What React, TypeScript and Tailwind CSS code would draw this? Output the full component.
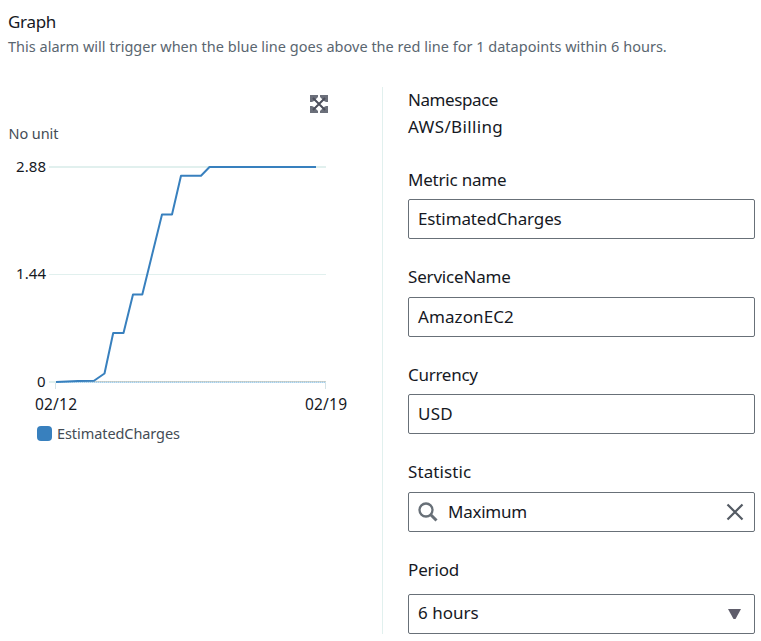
import type { ReactNode } from "react";

const SERIES =
  "56,382 78,381 94,380.7 104.5,373.5 113.2,333 123.5,333 133,294.5 142.3,294.5 162,214.5 172,214.5 181,175.7 201,175.7 209.5,167 316,167";

function ExpandIcon() {
  return (
    <svg width="18" height="18" viewBox="0 0 18 18" fill="#6b6f7a">
      <path d="M0 0h8v2L6 4 4 6 2 7H0ZM18 0v7h-2l-2-1-4-4V0ZM0 18v-7h2l2 1 4 4v2ZM18 18h-8v-2l4-4 2-1h2Z" />
      <path d="m3 3 12 12M15 3 3 15" stroke="#4c4f5c" strokeWidth="2" />
    </svg>
  );
}

function Chart() {
  return (
    <svg
      className="block"
      width="382"
      height="334"
      viewBox="0 120 382 334"
      fontFamily="'Noto Sans', 'Open Sans', sans-serif"
      fontSize="15"
      fill="#16191f"
    >
      <text x="8.5" y="139" fontSize="14.5" fill="#444c55" textLength="50">No unit</text>
      <path d="M49 167H326" stroke="#e1f0ee" strokeWidth="2" />
      <path d="M49 274.5H326" stroke="#e1f0ee" />
      <path d="M49 382H56" stroke="#e1f0ee" strokeWidth="2" />
      <path d="M55.5 383v6M325.5 383v6" stroke="#d5e3e6" />
      <path d="M56 381.5H326" stroke="#cfd3c8" />
      <path d="M56 382.5H326" stroke="#a5cfec" />
      <path d="M56 381.5H326" stroke="#b9c7cc" strokeDasharray="1 1" />
      <path d="M57 382.5H326" stroke="#cfe5f3" strokeDasharray="1 1" />
      <polyline points={SERIES} fill="none" stroke="#3880be" strokeWidth="2" strokeLinejoin="round" />
      <text x="16" y="172" textLength="30">2.88</text>
      <text x="16" y="279" textLength="30">1.44</text>
      <text x="37" y="387">0</text>
      <text x="35" y="410" fontSize="15.5" textLength="42">02/12</text>
      <text x="305" y="410" fontSize="15.5" textLength="42">02/19</text>
      <rect x="37" y="426" width="15" height="15" rx="4" fill="#3880be" />
      <text x="57" y="439" fontSize="14.5" fill="#444c55" textLength="123">EstimatedCharges</text>
    </svg>
  );
}

function Box({ children }: { children: ReactNode }) {
  return (
    <div className="flex h-10 w-[347px] items-center rounded-[2px] border border-[#687078] pr-[10px] pl-[9px]">
      {children}
    </div>
  );
}

export default function App() {
  return (
    <main className="h-[641px] w-[761px] overflow-hidden bg-white font-['Noto_Sans','Open_Sans',sans-serif] text-[17px] leading-6 text-[#16191f]">
      <header className="h-[87px] pt-[10px] pl-2">
        <h2 className="h-6 tracking-[-0.3px]">Graph</h2>
        <p className="whitespace-nowrap text-[14.5px] tracking-[0.012px] text-[#5a6670]">
          This alarm will trigger when the blue line goes above the red line for 1 datapoints within 6 hours.
        </p>
      </header>
      <div className="flex h-[547px]">
        <section className="w-[382px] shrink-0">
          <div className="flex h-[33px] justify-end pt-2 pr-[54px]">
            <ExpandIcon />
          </div>
          <Chart />
        </section>
        <section className="flex flex-col border-l border-[#e1f0ee] pl-[25px]">
          <div className="h-[80px] pt-px">
            <div className="h-[27px] tracking-[-0.42px]">Namespace</div>
            <div className="tracking-[0.35px]">AWS/Billing</div>
          </div>
          <div className="h-[98px]">
            <div className="h-8 pt-px tracking-[-0.2px]">Metric name</div>
            <Box>
              <span className="tracking-[-0.12px]">EstimatedCharges</span>
            </Box>
          </div>
          <div className="h-[97px]">
            <div className="h-8 tracking-[-0.18px]">ServiceName</div>
            <Box>
              <span className="tracking-[0.1px]">AmazonEC2</span>
            </Box>
          </div>
          <div className="h-[98px]">
            <div className="h-8 pt-px tracking-[-0.27px]">Currency</div>
            <Box>
              <span className="tracking-[0.2px]">USD</span>
            </Box>
          </div>
          <div className="h-[98px]">
            <div className="h-8 tracking-[0.1px]">Statistic</div>
            <Box>
              <svg width="20" height="20" viewBox="0 0 20 20" fill="none" stroke="#687078">
                <circle cx="8" cy="8" r="6.5" strokeWidth="2.3" />
                <path d="m12.5 12.5 6 6" strokeWidth="3" />
              </svg>
              <span className="ml-[10px] tracking-[-0.25px]">Maximum</span>
              <svg className="ml-auto" width="18" height="18" viewBox="0 0 18 18" fill="none" stroke="#545b64" strokeWidth="2.2">
                <path d="m1.5 1.5 15 15M16.5 1.5l-15 15" />
              </svg>
            </Box>
          </div>
          <div>
            <div className="h-[36px] tracking-[-0.15px]">Period</div>
            <Box>
              <span className="mb-[2px]">6 hours</span>
              <svg className="mr-[3px] ml-auto" width="13" height="10" viewBox="0 0 13 10" fill="#5f5d6b">
                <path d="M0 0h13L7.5 10h-2Z" />
              </svg>
            </Box>
          </div>
        </section>
      </div>
    </main>
  );
}
